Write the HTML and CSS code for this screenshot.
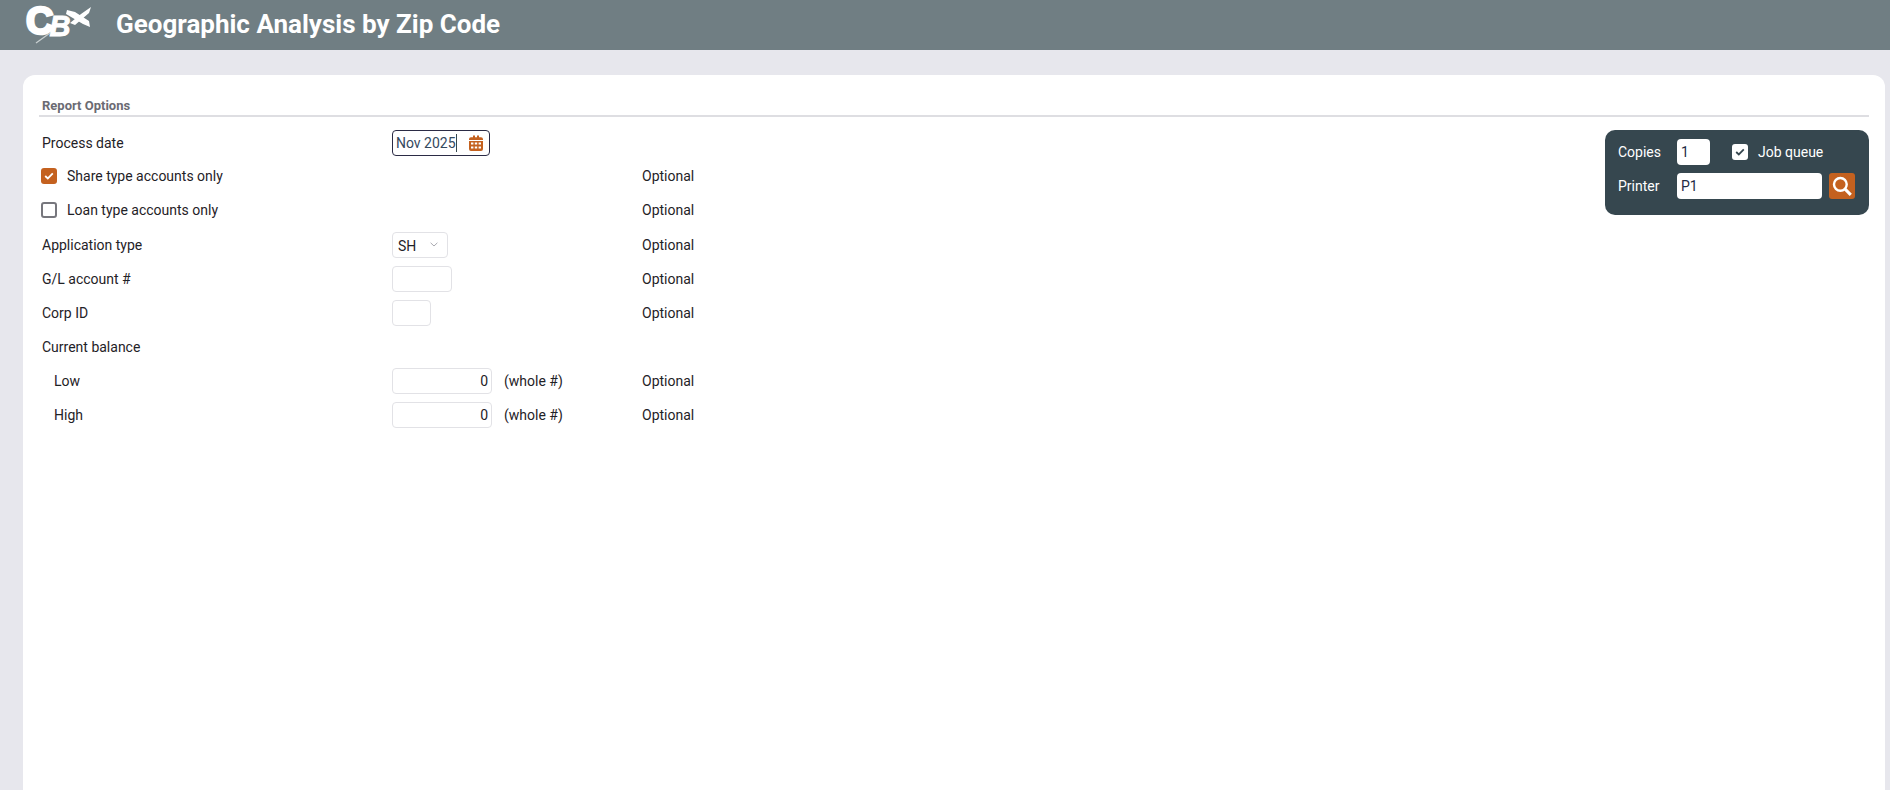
FILE: index.html
```html
<!DOCTYPE html>
<html lang="en">
<head>
<meta charset="utf-8">
<title>Geographic Analysis by Zip Code</title>
<link rel="stylesheet" href="styles.css">
</head>
<body>
<header class="topbar">
  <svg class="logo" width="72" height="50" viewBox="0 0 72 50" aria-label="CBX">
    <text class="logo-word" x="3" y="34"><tspan class="logo-c">C</tspan><tspan class="logo-b" dx="-4" dy="2">B</tspan></text>
    <path class="logo-x" d="M44 10 L52 12 L66 21 L67 27 L60 24 L43 14 Z M68 7 L66 13 L52 25 L47 23 L58 14 Z"/>
    <path class="logo-slash" d="M13 43 L27 33" />
  </svg>
  <h1 class="title">Geographic Analysis by Zip Code</h1>
</header>
<main class="card">
  <h2 class="section-title">Report Options</h2>
  <div class="content">
    <div class="form">
      <div class="row">
        <span class="label">Process date</span>
        <span class="field date-field">
          <span class="date-text">Nov 2025</span><span class="caret"></span>
          <svg class="cal" width="14" height="16" viewBox="0 0 14 16"><path d="M2 2.2h2V.6h2v1.6h2V.6h2v1.6h2a2 2 0 0 1 2 2V5H0v-.8a2 2 0 0 1 2-2z"/><path fill-rule="evenodd" d="M0 6h14v8a2 2 0 0 1-2 2H2a2 2 0 0 1-2-2zM2 7.6v2h2.4v-2zm3.8 0v2h2.4v-2zm3.8 0v2H12v-2zM2 11.4v2h2.4v-2zm3.8 0v2h2.4v-2zm3.8 0v2H12v-2z"/></svg>
        </span>
        <span class="opt"></span>
      </div>
      <div class="row check-row">
        <label class="check-label"><span class="box box-on"><svg width="10" height="8" viewBox="0 0 10 8"><path d="M1.2 4 L3.8 6.4 L8.8 1.4" fill="none" stroke="#fff" stroke-width="1.8"/></svg></span>Share type accounts only</label>
        <span></span>
        <span class="opt">Optional</span>
      </div>
      <div class="row check-row">
        <label class="check-label"><span class="box box-off"></span>Loan type accounts only</label>
        <span></span>
        <span class="opt">Optional</span>
      </div>
      <div class="row">
        <span class="label">Application type</span>
        <span class="field select-field"><span class="select-text">SH</span><svg width="8" height="5" viewBox="0 0 8 5"><path d="M.6.8 L4 4 L7.4.8" fill="none" stroke="#a9a9b0" stroke-width="1"/></svg></span>
        <span class="opt">Optional</span>
      </div>
      <div class="row">
        <span class="label">G/L account #</span>
        <span class="field w-gl"></span>
        <span class="opt">Optional</span>
      </div>
      <div class="row">
        <span class="label">Corp ID</span>
        <span class="field w-corp"></span>
        <span class="opt">Optional</span>
      </div>
      <div class="row">
        <span class="label">Current balance</span>
      </div>
      <div class="row">
        <span class="label sub">Low</span>
        <span class="amount"><span class="field w-num">0</span><span class="hint">(whole #)</span></span>
        <span class="opt">Optional</span>
      </div>
      <div class="row">
        <span class="label sub">High</span>
        <span class="amount"><span class="field w-num">0</span><span class="hint">(whole #)</span></span>
        <span class="opt">Optional</span>
      </div>
    </div>
    <aside class="panel">
      <div class="panel-row">
        <span class="panel-label">Copies</span>
        <span class="panel-input w-copies">1</span>
        <span class="box box-light"><svg width="10" height="8" viewBox="0 0 10 8"><path d="M1.2 4 L3.8 6.4 L8.8 1.4" fill="none" stroke="#36474f" stroke-width="1.8"/></svg></span>
        <span class="panel-text">Job queue</span>
      </div>
      <div class="panel-row">
        <span class="panel-label">Printer</span>
        <span class="panel-input w-printer">P1</span>
        <span class="search-btn"><svg width="22" height="22" viewBox="0 0 20 20"><circle cx="8.5" cy="8.5" r="5.8" fill="none" stroke="#fff" stroke-width="2.2"/><path d="M12.8 12.8 L18 18" stroke="#fff" stroke-width="2.8"/></svg></span>
      </div>
    </aside>
  </div>
</main>
</body>
</html>
```
FILE: styles.css
```css
* { box-sizing: border-box; }
html, body { margin: 0; height: 790px; overflow: hidden; }
body {
  background: #e7e7ed;
  font-family: Roboto, "Liberation Sans", sans-serif;
  font-size: 14px;
  color: #1f2227;
  display: flex;
  flex-direction: column;
}
.topbar {
  height: 50px;
  flex: none;
  background: #707e83;
  display: flex;
  align-items: center;
  padding-left: 23px;
  color: #fff;
}
.logo { flex: none; overflow: visible; }
.logo-word { font-family: "Liberation Sans", sans-serif; font-weight: 700; fill: #fff; }
.logo-c { font-size: 38px; stroke: #fff; stroke-width: 2.6px; }
.logo-b { font-size: 29px; font-style: italic; stroke: #fff; stroke-width: 1px; }
.logo-x { fill: #fff; }
.logo-slash { stroke: #c9d0d2; stroke-width: 1.2; fill: none; }
.title { margin: 0 0 0 21px; font-size: 26px; font-weight: 700; line-height: 48px; height: 50px; }
.card {
  flex: 1;
  margin: 25px 5px 0 23px;
  background: #fff;
  border-radius: 12px 12px 0 0;
  padding: 24px 16px 0;
}
.section-title {
  margin: 0;
  height: 18px;
  padding-left: 3px;
  font-size: 13px;
  font-weight: 700;
  line-height: 14px;
  color: #6b6b73;
  border-bottom: 2px solid #dedee2;
}
.content { display: flex; justify-content: space-between; align-items: flex-start; padding-top: 9px; }
.row {
  display: grid;
  grid-template-columns: 353px 250px auto;
  height: 34px;
  align-items: center;
}
.check-row { padding-bottom: 2px; }
.label { padding-left: 3px; }
.sub { padding-left: 15px; }
.check-label { display: flex; align-items: center; padding-left: 2px; }
.box {
  width: 16px;
  height: 16px;
  border-radius: 3px;
  display: flex;
  align-items: center;
  justify-content: center;
  flex: none;
}
.check-label .box { margin-right: 10px; }
.box-on { background: #c4611f; }
.box-off { border: 2px solid #77777d; }
.box-light { background: #fff; margin-left: 22px; }
.field {
  display: flex;
  align-items: center;
  height: 26px;
  border: 1px solid #e2e2e6;
  border-radius: 4px;
  background: #fff;
}
.date-field {
  width: 98px;
  border-color: #2b2b45;
  padding-left: 3px;
  color: #34495e;
}
.caret { width: 1px; height: 18px; background: #36474f; }
.cal { fill: #c4611f; margin-left: auto; margin-right: 6px; }
.select-field { width: 56px; justify-content: space-between; padding: 2px 9px 0 5px; }
.select-field svg { margin-top: -4px; }
.w-gl { width: 60px; }
.w-corp { width: 39px; }
.w-num { width: 100px; justify-content: flex-end; padding-right: 3px; }
.amount { display: flex; align-items: center; gap: 12px; }
.panel {
  width: 264px;
  height: 85px;
  margin-top: 4px;
  background: #36474f;
  border-radius: 10px;
  padding: 9px 14px 0 13px;
  color: #fff;
  display: flex;
  flex-direction: column;
  gap: 8px;
}
.panel-row { display: flex; align-items: center; height: 26px; }
.panel-label { width: 59px; }
.panel-input {
  height: 26px;
  background: #fff;
  border-radius: 4px;
  color: #1f2a44;
  display: flex;
  align-items: center;
  padding-left: 4px;
}
.w-copies { width: 33px; }
.w-printer { width: 145px; }
.panel-text { margin-left: 10px; }
.search-btn {
  width: 26px;
  height: 26px;
  margin-left: 7px;
  border-radius: 3px;
  background: #c4611f;
  display: flex;
  align-items: center;
  justify-content: center;
}
```
